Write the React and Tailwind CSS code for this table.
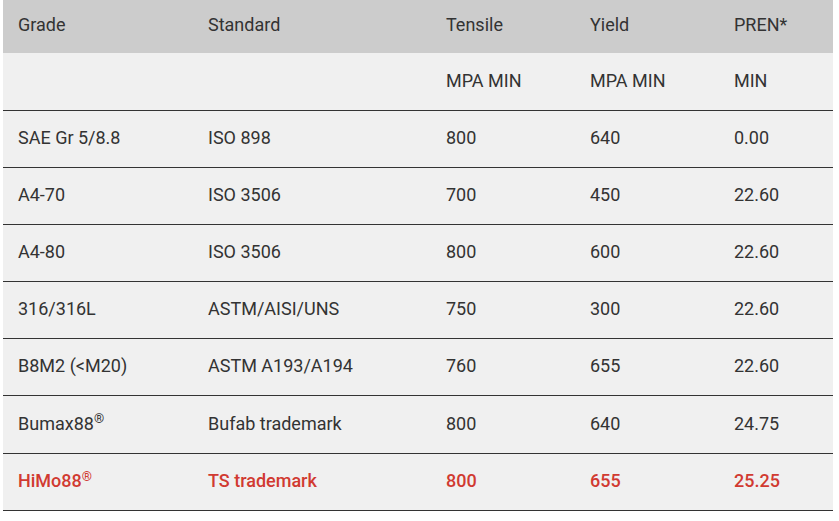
import React from "react";

const rows = [
  ["SAE Gr 5/8.8", "ISO 898", "800", "640", "0.00"],
  ["A4-70", "ISO 3506", "700", "450", "22.60"],
  ["A4-80", "ISO 3506", "800", "600", "22.60"],
  ["316/316L", "ASTM/AISI/UNS", "750", "300", "22.60"],
  ["B8M2 (<M20)", "ASTM A193/A194", "760", "655", "22.60"],
];

const cell = "pl-[15px] text-left align-middle";
const td = `${cell} pb-[2px]`;

const App = () => {
  return (
    <div className="min-h-[521px] bg-white pl-[3px] font-['Roboto',sans-serif] text-[18px] text-[#333]">
      <table className="w-[830px] table-fixed border-collapse">
        <colgroup>
          <col className="w-[190px]" />
          <col className="w-[238px]" />
          <col className="w-[144px]" />
          <col className="w-[144px]" />
          <col className="w-[114px]" />
        </colgroup>
        <thead>
          <tr className="h-[53px] bg-[#cccccc]">
            <th className={`${cell} pb-[5px] font-normal`}>Grade</th>
            <th className={`${cell} pb-[5px] font-normal`}>Standard</th>
            <th className={`${cell} pb-[5px] font-normal`}>Tensile</th>
            <th className={`${cell} pb-[5px] font-normal`}>Yield</th>
            <th className={`${cell} pb-[5px] font-normal`}>PREN*</th>
          </tr>
        </thead>
        <tbody className="bg-[#f0f0f0]">
          <tr className="h-[57px] border-b border-[#333]">
            <td className={td}></td>
            <td className={td}></td>
            <td className={td}>MPA MIN</td>
            <td className={td}>MPA MIN</td>
            <td className={td}>MIN</td>
          </tr>
          {rows.map((r) => (
            <tr key={r[0]} className="h-[57px] border-b border-[#333]">
              {r.map((c, i) => (
                <td key={i} className={td}>{c}</td>
              ))}
            </tr>
          ))}
          <tr className="h-[58px] border-b border-[#333]">
            <td className={td}>
              Bumax88<sup className="text-[13px]">®</sup>
            </td>
            <td className={td}>Bufab trademark</td>
            <td className={td}>800</td>
            <td className={td}>640</td>
            <td className={td}>24.75</td>
          </tr>
          <tr className="h-[57px] border-b border-[#333] font-medium text-[#d13a31]">
            <td className={td}>
              HiMo88<sup className="text-[13px]">®</sup>
            </td>
            <td className={td}>TS trademark</td>
            <td className={td}>800</td>
            <td className={td}>655</td>
            <td className={td}>25.25</td>
          </tr>
        </tbody>
      </table>
    </div>
  );
};

export default App;
